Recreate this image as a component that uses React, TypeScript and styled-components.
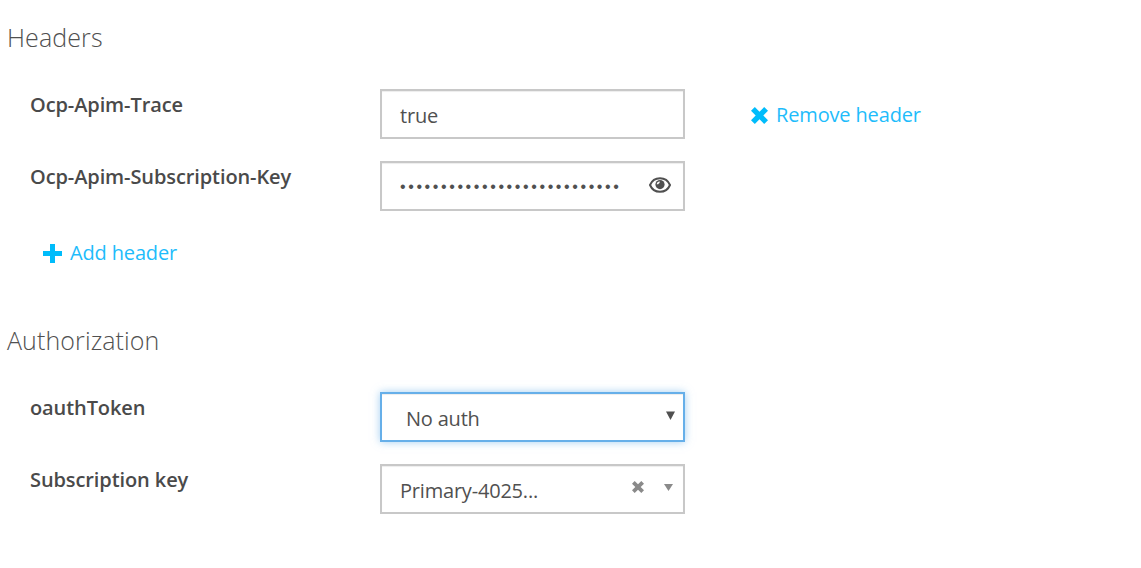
import { createGlobalStyle } from "styled-components";
import styled from "styled-components";

const GlobalStyle = createGlobalStyle`
  html, body {
    margin: 0;
    padding: 0;
    background: #fff;
  }
`;

const Page = styled.div`
  width: 1141px;
  height: 568px;
  overflow: hidden;
  padding: 19px 0 0 7px;
  box-sizing: border-box;
  font-family: "Open Sans", "Noto Sans", sans-serif;
  color: #505050;
`;

const SectionTitle = styled.h2`
  margin: 0;
  height: 36px;
  line-height: 36px;
  font-size: 25px;
  font-weight: 300;
  letter-spacing: 0.1px;
  color: #505050;
`;

const Rows = styled.div`
  display: flex;
  flex-direction: column;
  gap: 22px;
  margin: 34px 0 0 23px;
`;

const Row = styled.div`
  display: flex;
  align-items: flex-start;
`;

const Label = styled.div`
  width: 350px;
  flex: none;
  font-size: 20px;
  font-weight: 600;
  line-height: 32px;
  letter-spacing: -0.1px;
  color: #4a4a4a;
`;

const Field = styled.div<{ $focused?: boolean }>`
  width: 305px;
  height: 50px;
  flex: none;
  box-sizing: border-box;
  display: flex;
  align-items: center;
  padding: 2px 0 0 18px;
  background: #fff;
  border: 2px solid ${(p) => (p.$focused ? "#66afe9" : "#c8c8c8")};
  box-shadow: ${(p) =>
    p.$focused
      ? "inset 0 1px 1px rgba(0,0,0,.075), 0 0 8px rgba(102,175,233,.6)"
      : "inset 0 1px 1px rgba(0,0,0,.075)"};
  font-size: 20px;
  letter-spacing: -0.2px;
  color: #505050;
`;

const Value = styled.span<{ $indent?: boolean }>`
  flex: 1;
  margin-left: ${(p) => (p.$indent ? "6px" : "0")};
  white-space: nowrap;
`;

const Dots = styled.span`
  flex: 1;
  font-family: "Liberation Sans", sans-serif;
  font-size: 16px;
  letter-spacing: 2.6px;
  white-space: nowrap;
`;

const LinkAction = styled.a`
  display: flex;
  align-items: center;
  gap: 8px;
  font-size: 20px;
  letter-spacing: -0.15px;
  color: #1ebcfb;
  line-height: 30px;
`;

const RemoveSlot = styled.div`
  margin: 11px 0 0 66px;
`;

const AddSlot = styled.div`
  margin: 27px 0 0 36px;
`;

const Caret = styled.svg`
  flex: none;
  margin-top: -6px;
`;

const EyeIcon = styled.svg`
  flex: none;
  margin: -4px 12px 0 0;
`;

const ClearIcon = styled.svg`
  flex: none;
  margin: -6px 20px 0 0;
`;

const SelectCaret = styled(Caret)<{ $right: number }>`
  margin-right: ${(p) => p.$right}px;
`;

const AuthTitle = styled(SectionTitle)`
  margin-top: 54px;
`;

const AuthRows = styled(Rows)`
  margin-top: 34px;
`;

const crossPath =
  "M3.6 0 L8 4.4 L12.4 0 L16 3.6 L11.6 8 L16 12.4 L12.4 16 L8 11.6 L3.6 16 L0 12.4 L4.4 8 L0 3.6 Z";

function CrossIcon({ size, color }: { size: number; color: string }) {
  return (
    <svg width={size} height={size} viewBox="0 0 16 16" aria-hidden="true">
      <path d={crossPath} fill={color} />
    </svg>
  );
}

function PlusIcon() {
  return (
    <svg width="19" height="19" viewBox="0 0 19 19" aria-hidden="true">
      <path d="M7 0 H12 V7 H19 V12 H12 V19 H7 V12 H0 V7 H7 Z" fill="#00bcfb" />
    </svg>
  );
}

export default function App() {
  return (
    <>
      <GlobalStyle />
      <Page>
        <SectionTitle>Headers</SectionTitle>
        <Rows>
          <Row>
            <Label>Ocp-Apim-Trace</Label>
            <Field>
              <Value>true</Value>
            </Field>
            <RemoveSlot>
              <LinkAction>
                <CrossIcon size={17} color="#00bcfb" />
                Remove header
              </LinkAction>
            </RemoveSlot>
          </Row>
          <Row>
            <Label>Ocp-Apim-Subscription-Key</Label>
            <Field>
              <Dots>{"•".repeat(27)}</Dots>
              <EyeIcon width="22" height="16" viewBox="0 0 22 16" aria-hidden="true">
                <path
                  d="M11 1.2 C6.2 1.2 2.6 4.2 1 8 C2.6 11.8 6.2 14.8 11 14.8 C15.8 14.8 19.4 11.8 21 8 C19.4 4.2 15.8 1.2 11 1.2 Z"
                  fill="none"
                  stroke="#505050"
                  strokeWidth="2"
                />
                <circle cx="11" cy="7.6" r="4.6" fill="#505050" />
                <path d="M7.6 7.2 A3.4 3.4 0 0 1 10.6 4.2 L10.6 6 A2 2 0 0 0 9.2 7.2 Z" fill="#fff" />
              </EyeIcon>
            </Field>
          </Row>
        </Rows>
        <AddSlot>
          <LinkAction>
            <PlusIcon />
            Add header
          </LinkAction>
        </AddSlot>
        <AuthTitle>Authorization</AuthTitle>
        <AuthRows>
          <Row>
            <Label>oauthToken</Label>
            <Field $focused>
              <Value $indent>No auth</Value>
              <SelectCaret $right={8} width="9" height="9" viewBox="0 0 9 9" aria-hidden="true">
                <path d="M0 0.5 H9 L4.5 9 Z" fill="#505050" />
              </SelectCaret>
            </Field>
          </Row>
          <Row>
            <Label>Subscription key</Label>
            <Field>
              <Value>Primary-4025...</Value>
              <ClearIcon width="12" height="12" viewBox="0 0 16 16" aria-hidden="true">
                <path d={crossPath} fill="#8a8a8a" />
              </ClearIcon>
              <SelectCaret $right={10} width="9" height="7" viewBox="0 0 9 7" aria-hidden="true">
                <path d="M0 0 H9 L4.5 7 Z" fill="#8a8a8a" />
              </SelectCaret>
            </Field>
          </Row>
        </AuthRows>
      </Page>
    </>
  );
}
